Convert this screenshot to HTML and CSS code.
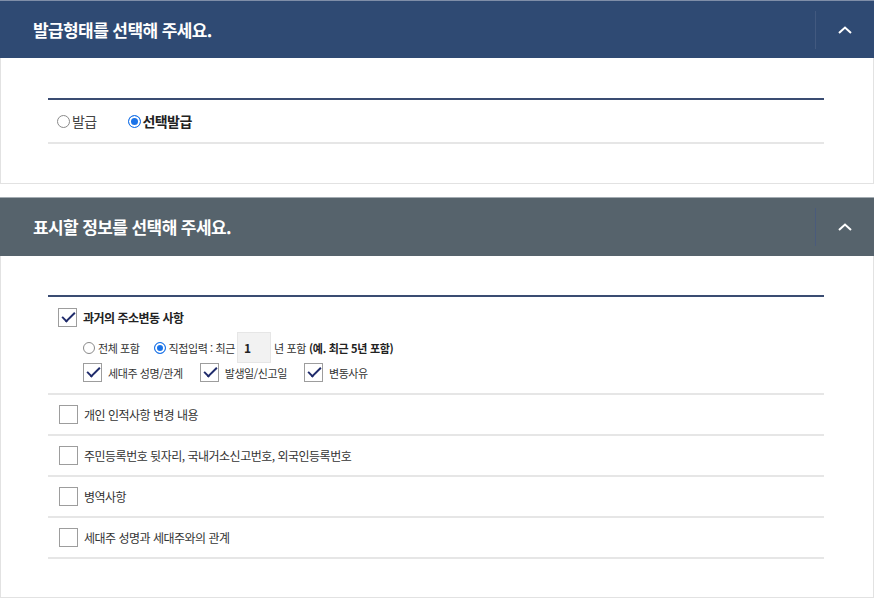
FILE: index.html
```html
<!DOCTYPE html>
<html lang="ko">
<head>
<meta charset="utf-8">
<title>발급형태 선택</title>
<link rel="stylesheet" href="styles.css">
</head>
<body>
<main class="page">
  <section class="panel">
    <header class="panel-head head-navy">
      <h2 class="panel-title">발급형태를 선택해 주세요.</h2>
      <span class="toggle" aria-label="접기">
        <svg width="14" height="8" viewBox="0 0 14 8"><polyline points="1,7 7,1.5 13,7" fill="none" stroke="#fff" stroke-width="2"/></svg>
      </span>
    </header>
    <div class="panel-body">
      <div class="opt-table">
        <div class="opt-row issue-row">
          <label class="radio-label big"><input type="radio" name="issue" class="radio"><span>발급</span></label>
          <label class="radio-label big strong"><input type="radio" name="issue" class="radio" checked><span>선택발급</span></label>
        </div>
      </div>
    </div>
  </section>

  <section class="panel">
    <header class="panel-head head-slate">
      <h2 class="panel-title">표시할 정보를 선택해 주세요.</h2>
      <span class="toggle" aria-label="접기">
        <svg width="14" height="8" viewBox="0 0 14 8"><polyline points="1,7 7,1.5 13,7" fill="none" stroke="#fff" stroke-width="2"/></svg>
      </span>
    </header>
    <div class="panel-body">
      <div class="opt-table">
        <div class="opt-row main-row">
          <label class="check-label strong-lg"><input type="checkbox" class="check" checked><span>과거의 주소변동 사항</span></label>
          <div class="sub-line">
            <label class="radio-label small"><input type="radio" name="period" class="radio"><span>전체 포함</span></label>
            <label class="radio-label small"><input type="radio" name="period" class="radio" checked><span>직접입력 : 최근</span></label>
            <span class="year-box">1</span>
            <span class="sub-text">년 포함 <b>(예. 최근 5년 포함)</b></span>
          </div>
          <div class="sub-checks">
            <label class="check-label small"><input type="checkbox" class="check" checked><span>세대주 성명/관계</span></label>
            <label class="check-label small"><input type="checkbox" class="check" checked><span>발생일/신고일</span></label>
            <label class="check-label small"><input type="checkbox" class="check" checked><span>변동사유</span></label>
          </div>
        </div>
        <div class="opt-row item-row">
          <label class="check-label item"><input type="checkbox" class="check"><span>개인 인적사항 변경 내용</span></label>
        </div>
        <div class="opt-row item-row">
          <label class="check-label item"><input type="checkbox" class="check"><span>주민등록번호 뒷자리, 국내거소신고번호, 외국인등록번호</span></label>
        </div>
        <div class="opt-row item-row">
          <label class="check-label item"><input type="checkbox" class="check"><span>병역사항</span></label>
        </div>
        <div class="opt-row item-row">
          <label class="check-label item"><input type="checkbox" class="check"><span>세대주 성명과 세대주와의 관계</span></label>
        </div>
      </div>
    </div>
  </section>
</main>
</body>
</html>
```

FILE: styles.css
```css
* { box-sizing: border-box; }

html, body {
  margin: 0;
  padding: 0;
  background: #fff;
}

body {
  font-family: "Noto Sans CJK KR", "Noto Sans", sans-serif;
  color: #333;
}

.page {
  width: 874px;
  display: flex;
  flex-direction: column;
  gap: 13px;
}

.panel {
  display: flex;
  flex-direction: column;
}

.panel-head {
  height: 58px;
  display: flex;
  align-items: center;
  justify-content: space-between;
  border-top: 1px solid #8d9ab0;
}

.head-navy { background: #2f4a73; border-top-color: #7f8ea8; }
.head-slate { background: #56636c; border-top-color: #a4acb2; height: 59px; }

.panel-title {
  margin: 0;
  padding-left: 33px;
  color: #fff;
  font-size: 17px;
  font-weight: 700;
  letter-spacing: -0.6px;
  line-height: 20px;
}

.toggle {
  width: 59px;
  height: 38px;
  display: flex;
  align-items: center;
  justify-content: center;
  border-left: 1px solid #42597f;
}

.head-slate .toggle { border-left-color: #4a5b7c; }

.panel-body {
  border: 1px solid #e2e2e2;
  border-top: 0;
  padding: 40px 49px 39px 47px;
}

.panel-head.head-slate + .panel-body {
  padding-top: 39px;
  padding-bottom: 38px;
}

.opt-table {
  border-top: 2px solid #3a4c72;
}

.opt-row {
  border-bottom: 2px solid #e6e6e6;
}

.issue-row {
  height: 44px;
  display: flex;
  align-items: center;
  gap: 31px;
  padding-left: 9px;
}

.radio-label,
.check-label {
  display: inline-flex;
  align-items: center;
  cursor: pointer;
}

.radio-label {
  gap: 2px;
  font-size: 13px;
  letter-spacing: -0.4px;
  color: #444;
}

.radio-label.big {
  font-size: 14px;
  letter-spacing: -0.6px;
}

.radio-label.big .radio {
  width: 13px;
  height: 13px;
}

.radio-label.strong { font-weight: 700; color: #222; }

.radio {
  appearance: none;
  -webkit-appearance: none;
  margin: 0;
  width: 12px;
  height: 12px;
  border: 1px solid #8a8a8a;
  border-radius: 50%;
  background: #fff;
}

.radio:checked {
  border-color: #1a73e8;
  background: #1a73e8;
  box-shadow: inset 0 0 0 2px #fff;
}

.check {
  appearance: none;
  -webkit-appearance: none;
  margin: 0;
  width: 19px;
  height: 19px;
  border: 1px solid #9d9d9d;
  background: #fff;
  position: relative;
  flex: none;
}

.check:checked::after {
  content: "";
  position: absolute;
  left: 3px;
  top: 3px;
  width: 11px;
  height: 5px;
  border-left: 2.5px solid #1f2b6b;
  border-bottom: 2.5px solid #1f2b6b;
  transform: rotate(-45deg);
}

.check-label { gap: 6px; }

.strong-lg {
  font-size: 12px;
  font-weight: 700;
  letter-spacing: -0.5px;
  color: #222;
}

.small {
  font-size: 11px;
  letter-spacing: -0.4px;
  color: #333;
}

.item {
  font-size: 12px;
  letter-spacing: -0.5px;
  color: #333;
}

.main-row {
  padding: 11px 0 11px 10px;
  display: flex;
  flex-direction: column;
  align-items: flex-start;
}

.sub-line {
  margin-top: 5px;
  height: 31px;
  padding-left: 25px;
  display: flex;
  align-items: center;
}

.sub-line .radio-label { gap: 3px; }
.sub-line .radio-label + .radio-label { margin-left: 14px; }

.year-box {
  margin-left: 2px;
  width: 34px;
  height: 31px;
  background: #f2f2f2;
  border: 1px solid #e6e6e6;
  font-size: 12px;
  font-weight: 700;
  color: #222;
  display: flex;
  align-items: center;
  padding-left: 6px;
}

.sub-text {
  margin-left: 3px;
  font-size: 11px;
  letter-spacing: -0.3px;
  color: #333;
}

.sub-text b { color: #222; }

.sub-checks {
  padding-left: 25px;
  display: flex;
  gap: 17px;
  height: 19px;
}

.sub-checks .check-label { gap: 6px; }

.item-row {
  height: 41px;
  display: flex;
  align-items: center;
  padding-left: 11px;
}
```
